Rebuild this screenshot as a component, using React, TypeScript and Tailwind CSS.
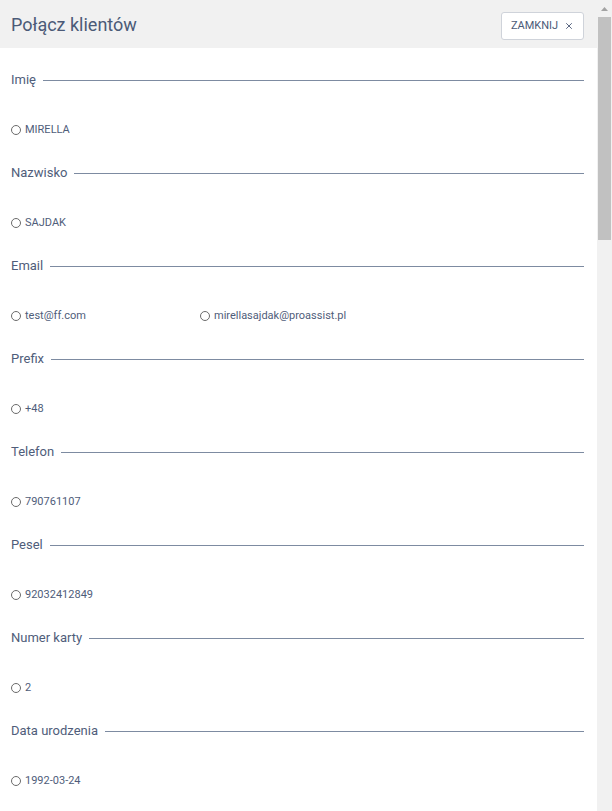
import {X} from 'lucide-react';

type Field = {
    label: string;
    options: string[];
};

const fields: Field[] = [
    {label: 'Imię', options: ['MIRELLA']},
    {label: 'Nazwisko', options: ['SAJDAK']},
    {label: 'Email', options: ['test@ff.com', 'mirellasajdak@proassist.pl']},
    {label: 'Prefix', options: ['+48']},
    {label: 'Telefon', options: ['790761107']},
    {label: 'Pesel', options: ['92032412849']},
    {label: 'Numer karty', options: ['2']},
    {label: 'Data urodzenia', options: ['1992-03-24']},
];

function FieldSection({field}: {field: Field}) {
    return (
        <div className="mb-[25px]">
            <div className="flex h-5 items-center gap-[7px]">
                <span className="text-[13px] leading-5 text-[#4f5d7a]">{field.label}</span>
                <div className="h-px flex-1 bg-[#7d8ba1]"/>
            </div>
            <div className="mt-[32px] flex h-4 items-center">
                {field.options.map((opt) => (
                    <label key={opt} className="flex w-[189px] items-center gap-[4px] text-[11px] text-[#4f5d7a]">
                        <span className="h-[10px] w-[10px] shrink-0 rounded-full border border-[#6b6b6b] bg-white"/>
                        {opt}
                    </label>
                ))}
            </div>
        </div>
    );
}

export default function App() {
    return (
        <div
            className="flex h-[811px] overflow-hidden bg-white"
            style={{fontFamily: 'Roboto, "Liberation Sans", sans-serif'}}
        >
            <div className="min-w-0 flex-1">
                <div className="flex h-12 items-center justify-between bg-[#f1f1f1] pl-[11px] pr-[13px]">
                    <h1 className="text-[18px] font-normal text-[#4b5a77]">Połącz klientów</h1>
                    <button
                        type="button"
                        className="mt-[4px] flex h-7 w-[83px] items-center justify-center gap-[6px] rounded-[3px] border border-[#cfd3da] bg-white text-[11px] text-[#4b5a77]"
                    >
                        ZAMKNIJ
                        <X className="h-[10px] w-[10px]" strokeWidth={2.2}/>
                    </button>
                </div>
                <div className="pl-[11px] pr-[13px] pt-[22px]">
                    {fields.map((f) => (
                        <FieldSection key={f.label} field={f}/>
                    ))}
                </div>
            </div>
            {/* scrollbar */}
            <div className="flex w-[15px] shrink-0 flex-col bg-[#f1f1f1]">
                <div className="flex h-[17px] items-center justify-center">
                    <svg width="7" height="4" viewBox="0 0 7 4">
                        <path d="M0 4 L3.5 0 L7 4 Z" fill="#a3a3a3"/>
                    </svg>
                </div>
                <div className="mx-[1px] h-[223px] bg-[#c1c1c1]"/>
            </div>
        </div>
    );
}
